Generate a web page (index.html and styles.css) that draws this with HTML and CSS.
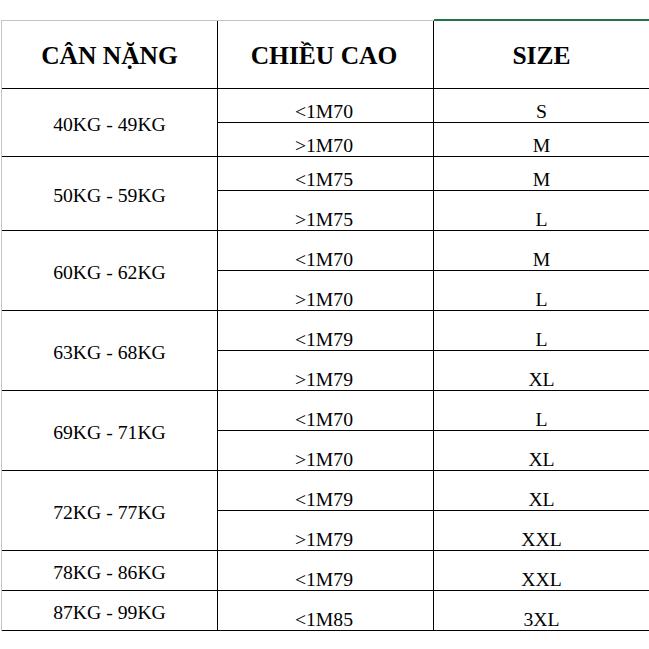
FILE: index.html
```html
<!DOCTYPE html>
<html lang="vi">
<head>
<meta charset="utf-8">
<title>Bảng size</title>
<link rel="stylesheet" href="styles.css">
</head>
<body>
<div class="sheet">
  <div class="cell c1 head">CÂN NẶNG</div>
  <div class="cell c2 head">CHIỀU CAO</div>
  <div class="cell c3 head green">SIZE</div>

  <div class="cell c1 weight span2">40KG - 49KG</div>
  <div class="cell c2">&lt;1M70</div>
  <div class="cell c3">S</div>
  <div class="cell c2">&gt;1M70</div>
  <div class="cell c3">M</div>

  <div class="cell c1 weight span2">50KG - 59KG</div>
  <div class="cell c2">&lt;1M75</div>
  <div class="cell c3">M</div>
  <div class="cell c2">&gt;1M75</div>
  <div class="cell c3">L</div>

  <div class="cell c1 weight span2">60KG - 62KG</div>
  <div class="cell c2">&lt;1M70</div>
  <div class="cell c3">M</div>
  <div class="cell c2">&gt;1M70</div>
  <div class="cell c3">L</div>

  <div class="cell c1 weight span2">63KG - 68KG</div>
  <div class="cell c2">&lt;1M79</div>
  <div class="cell c3">L</div>
  <div class="cell c2">&gt;1M79</div>
  <div class="cell c3">XL</div>

  <div class="cell c1 weight span2">69KG - 71KG</div>
  <div class="cell c2">&lt;1M70</div>
  <div class="cell c3">L</div>
  <div class="cell c2">&gt;1M70</div>
  <div class="cell c3">XL</div>

  <div class="cell c1 weight span2">72KG - 77KG</div>
  <div class="cell c2">&lt;1M79</div>
  <div class="cell c3">XL</div>
  <div class="cell c2">&gt;1M79</div>
  <div class="cell c3">XXL</div>

  <div class="cell c1 weight">78KG - 86KG</div>
  <div class="cell c2">&lt;1M79</div>
  <div class="cell c3">XXL</div>

  <div class="cell c1 weight">87KG - 99KG</div>
  <div class="cell c2">&lt;1M85</div>
  <div class="cell c3">3XL</div>
</div>
</body>
</html>
```
FILE: styles.css
```css
html, body {
  margin: 0;
  padding: 0;
  background: #ffffff;
  overflow: hidden;
}

body {
  padding-top: 20px;
  padding-left: 1px;
  font-family: "Liberation Serif", "Times New Roman", serif;
  color: #000000;
}

.sheet {
  display: grid;
  grid-template-columns: 216px 216px 215px;
  grid-template-rows: 68px 34px 34px 34px repeat(11, 40px);
  border-top: 1px solid #c4c4c4;
  border-left: 1px solid #c4c4c4;
  width: 647px;
}

.cell {
  box-sizing: border-box;
  border-bottom: 1px solid #000000;
  display: flex;
  justify-content: center;
  align-items: flex-end;
  font-size: 19.7px;
  line-height: 20px;
  padding-bottom: 1.5px;
  white-space: nowrap;
}

.c1 { grid-column: 1; border-right: 1px solid #000000; }
.c2 { grid-column: 2; border-right: 1px solid #000000; padding-right: 3px; }
.c3 { grid-column: 3; }

.span2 { grid-row: span 2; }

.weight {
  align-items: center;
  padding-bottom: 0;
  padding-top: 3px;
}

.head {
  align-items: center;
  font-size: 25.5px;
  font-weight: bold;
  line-height: 30px;
  padding-bottom: 0;
  padding-top: 2px;
}

.green {
  box-shadow: 0 -2px 0 #217346;
}
```
